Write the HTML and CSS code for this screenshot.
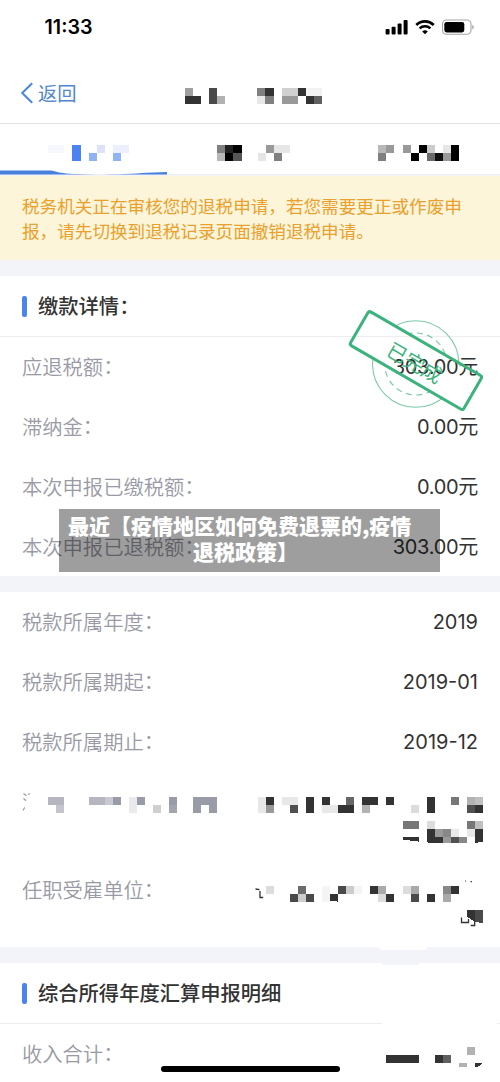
FILE: index.html
```html
<!DOCTYPE html>
<html lang="zh-CN">
<head>
<meta charset="utf-8">
<title>退税详情</title>
<link rel="stylesheet" href="styles.css">
</head>
<body>
<div class="screen">
  <header class="status">
    <span class="clock">11:33</span>
    <svg class="status-icons" width="90" height="18" viewBox="0 0 90 18">
      <rect x="0.6" y="11" width="4" height="5.4" rx="1"/>
      <rect x="6.6" y="8.8" width="4" height="7.6" rx="1"/>
      <rect x="12.6" y="5.6" width="4" height="10.8" rx="1"/>
      <rect x="18.6" y="2" width="4" height="14.4" rx="1"/>
      <path d="M31.300 6.900A12.600 12.600 0 0 1 48.700 6.900" fill="none" stroke="#000" stroke-width="2.700"/>
      <path d="M34.600 10.300A8 8 0 0 1 45.400 10.300" fill="none" stroke="#000" stroke-width="2.500"/>
      <path d="M37.200 13.400a4.200 4.200 0 0 1 5.600 0L40 16.300z"/>
      <rect x="57.500" y="2" width="28.500" height="14.300" rx="4" fill="none" stroke="#a3a3a3" stroke-width="1.100"/>
      <rect x="59.300" y="3.900" width="20" height="10.500" rx="2.300"/>
      <path d="M87.300 6.800c2 .8 2 3.900 0 4.700z" fill="#a3a3a3"/>
    </svg>
  </header>
  <nav class="navbar">
    <svg class="chevron" width="14" height="24" viewBox="0 0 14 24"><path d="M12.200 2.200L2.200 12l10 9.800"/></svg>
    <span class="back">返回</span>
    <svg class="nav-title" width="136.850" height="16.100" viewBox="23 11 17 2" shape-rendering="crispEdges">
      <path fill="#a0a0a0" d="M23 11h1v1h-1z"/><path fill="#333" d="M23 12h2v1h-2zM33 11h1v1h-1zM37 11h1v1h-1zM38 12h1v1h-1z"/>
      <path fill="#4a4a4a" d="M26 11h1v2h-1z"/><path fill="#b2b2b2" d="M27 12h1v1h-1z"/>
      <path fill="#808080" d="M32 11h1v1h-1zM33 12h1v1h-1z"/><path fill="#e8e8e8" d="M32 12h1v1h-1z"/>
      <path fill="#d0d0d0" d="M35 11h2v1h-2z"/><path fill="#f2f2f2" d="M38 11h2v1h-2z"/>
      <path fill="#999" d="M35 12h2v1h-2z"/><path fill="#606060" d="M39 12h1v1h-1z"/>
    </svg>
  </nav>
  <div class="tabs">
    <svg width="500" height="52" viewBox="0 0 500 52">
      <g transform="translate(0 -124) scale(8.050)" shape-rendering="crispEdges">
        <path fill="#f7f8fe" d="M6 18h2v1h-2z"/><path fill="#4a84f0" d="M9 18h1v2h-1z"/>
        <path fill="#8fb3f4" d="M11 19h1v1h-1zM14 19h1v1h-1z"/><path fill="#dde2fa" d="M12 18h1v1h-1z"/><path fill="#eeeffc" d="M14 18h2v1h-2z"/>
        <path fill="#808080" d="M27 18h1v1h-1zM34 19h1v1h-1zM47 19h1v1h-1z"/><path fill="#222" d="M28 18h1v1h-1z"/>
        <path fill="#000" d="M29 18h1v1h-1zM28 19h1v1h-1zM51 19h1v1h-1zM52 18h1v1h-1zM56 18h1v2h-1z"/>
        <path fill="#b8b8b8" d="M27 19h1v1h-1zM47 18h1v1h-1z"/><path fill="#555" d="M29 19h1v1h-1z"/>
        <path fill="#e6e6e6" d="M32 19h1v1h-1zM34 18h2v1h-2zM55 18h1v1h-1z"/>
        <path fill="#999" d="M33 18h1v1h-1zM48 18h1v1h-1zM50 18h1v1h-1zM55 19h1v1h-1z"/>
        <path fill="#ccc" d="M53 18h1v1h-1z"/><path fill="#6a6a6a" d="M53 19h1v1h-1z"/><path fill="#111" d="M54 19h1v1h-1z"/>
      </g>
      <path fill="#e9e9ee" d="M0 50.300h500v1.100H0z"/>
      <path fill="#4880de" d="M0 46.500h51C58 48 62 49.500 74 50C100 51 130 50 147 48.700L167 48v2.500H0z"/>
    </svg>
  </div>
  <p class="notice">税务机关正在审核您的退税申请，若您需要更正或作废申<br>报，请先切换到退税记录页面撤销退税申请。</p>

  <section class="card">
    <h2 class="heading">缴款详情<span class="colon">：</span></h2>
    <div class="row stamped"><span class="label">应退税额<span class="colon">：</span></span><span class="value amount">303.00元</span>
      <svg class="stamp" width="144" height="110" viewBox="344 306 144 110">
        <defs><clipPath id="ring"><path clip-rule="evenodd" d="M344 306h144v110H344zM369 310L483.500 376.500L463 411L348 344.500z"/></clipPath></defs>
        <g clip-path="url(#ring)" fill="none" stroke="#7cc9a8">
          <circle cx="415.700" cy="364" r="43.200" stroke-width="1.100"/>
          <circle cx="415.700" cy="364" r="31" stroke-width="1.200" stroke-dasharray="6 4.500"/>
        </g>
        <g transform="translate(415.900 360.600) rotate(30.100)">
          <rect x="-65.500" y="-19.500" width="131" height="39" rx="2.500" fill="none" stroke="#3cb37d" stroke-width="3"/>
          <text x="0" y="10" text-anchor="middle" class="stamp-text">已完成</text>
        </g>
      </svg>
    </div>
    <div class="row"><span class="label">滞纳金<span class="colon">：</span></span><span class="value amount">0.00元</span></div>
    <div class="row"><span class="label">本次申报已缴税额<span class="colon">：</span></span><span class="value amount">0.00元</span></div>
    <div class="row last"><span class="label">本次申报已退税额<span class="colon">：</span></span><span class="value amount">303.00元</span>
      <div class="banner"><div>最近【疫情地区如何免费退票的,疫情</div><div class="banner-second">退税政策】</div></div>
    </div>
  </section>

  <section class="card period">
    <div class="row"><span class="label">税款所属年度<span class="colon">：</span></span><span class="value">2019</span></div>
    <div class="row"><span class="label">税款所属期起<span class="colon">：</span></span><span class="value">2019-01</span></div>
    <div class="row"><span class="label">税款所属期止<span class="colon">：</span></span><span class="value">2019-12</span></div>
    <svg class="masked" width="500" height="87" viewBox="0 772 500 87">
      <path d="M23.500 793.500l3 2.200M23.500 798.500l2.500 2.200M23 810.500l1.700-3M28 794.500l2-1" stroke="#9a9ba6" stroke-width="1.200"/>
      <g transform="scale(8.050)" shape-rendering="crispEdges">
        <path fill="#b6b6c1" d="M6 99h2v1h-2zM11 99h2v1h-2z"/><path fill="#c4c4cc" d="M7 100h1v1h-1z"/>
        <path fill="#c9c9d6" d="M13 99h1v1h-1z"/><path fill="#9a9ba8" d="M14 99h1v1h-1zM17 99h1v1h-1zM21 99h1v1h-1zM24 99h3v2h-1v-1h-1v1h-1z"/>
        <path fill="#e9e9ee" d="M16 99h1v2h-1z"/><path fill="#cfcfd2" d="M19 100h1v1h-1z"/><path fill="#a2a5ae" d="M21 100h1v1h-1z"/>
        <path fill="#e8e8e8" d="M32 99h1v2h-1zM35 99h2v1h-2zM40 100h2v1h-2zM56 103h1v1h-1zM58 103h1v1h-1z"/>
        <path fill="#333" d="M33 99h1v1h-1zM38 99h1v2h-1zM40 99h1v1h-1zM42 100h2v1h-2zM45 99h2v1h-2zM48 99h1v1h-1zM53 99h1v2h-1zM59 100h1v1h-1zM50 104h2v.55L50 104.300zM53 103h1v1h1v.75L53 104.650zM59 103h1v1.600l-1 .1z"/>
        <path fill="#999" d="M33 100h1v1h-1zM54 103h1v1h-1zM55 104h1v.75h-1z"/><path fill="#505050" d="M36 100h1v1h-1zM58 100h1v1h-1zM56 104h1v.75h-1z"/>
        <path fill="#666" d="M43 99h1v1h-1z"/><path fill="#b2b2b2" d="M45 100h1v1h-1zM58 99h1v1h-1z"/>
        <path fill="#dcdcdc" d="M51 100h1v1h-1zM53 102h1v1h-1z"/><path fill="#777" d="M56 99h1v1h-1zM50 102h2v1h-2zM58 102h1v1h-1z"/>
        <path fill="#bfbfbf" d="M59 99h1v1h-1zM59 102h1v1h-1z"/><path fill="#888" d="M55 103h1v1h-1zM57 104h1v.75h-1z"/>
      </g>
    </svg>
    <div class="row employer"><span class="label">任职受雇单位<span class="colon">：</span></span>
      <svg width="235" height="60" viewBox="250 872 235 60">
        <path d="M255.500 889l4 .7M260 891v6.500h3.200M461.500 917.500v5h7v-3.500M474.700 921v4.500h-4" fill="none" stroke="#333" stroke-width="1.300"/>
        <path fill="#444" d="M465 880.500h1v1h-1zM470.500 881h1.500v1.300h-1.500z"/>
        <g transform="scale(8.050)" shape-rendering="crispEdges">
          <path fill="#dcdcdc" d="M33 110h1v1h-1zM47 111h1v1h-1zM50 110h1v1h-1z"/>
          <path fill="#4a4a4a" d="M36 111h1v1h-1zM38 111h1v1h-1zM42 110h1v1h-1zM51 111h1v1h-1zM59 113h1v1.650l-1-.1z"/>
          <path fill="#6c6c6c" d="M37 110h1v1h-1z"/><path fill="#ccc" d="M37 111h1v1h-1zM43 110h1v1h-1z"/><path fill="#f4f4f4" d="M40 110h1v2h-1zM44 110h1v1h-1z"/>
          <path fill="#333" d="M41 111h1v1l-1-.1zM46 110h1v1h-1zM48 111h1v1h-1zM53 111h1v1h-1zM56 110h1v1h-1zM58 113h1v1.500l-1-.6z"/>
          <path fill="#aaa" d="M47 110h1v1h-1zM51 110h1v1h-1zM55 111h1v1h-1z"/><path fill="#888" d="M55 110h1v1h-1z"/>
        </g>
      </svg>
    </div>
  </section>

  <section class="card summary">
    <h2 class="heading">综合所得年度汇算申报明细</h2>
    <div class="row"><span class="label">收入合计<span class="colon">：</span></span>
      <svg width="98" height="60" viewBox="386 1024 98 60">
        <g transform="scale(8.050)" shape-rendering="crispEdges">
          <path fill="#333" d="M48 131h4v1h-4zM54 131h1v1h-1zM59 132h1l-.4.350l-.3.150h-.3z"/><path fill="#606060" d="M55 131h1v1h-1z"/><path fill="#b2b2b2" d="M58 130h1v1h-1zM57 132h1v.55h-1z"/>
        </g>
      </svg>
    </div>
    <i class="smudge smudge-top"></i><i class="smudge smudge-bottom"></i><i class="smudge smudge-line"></i>
  </section>
  <div class="home-bar"></div>
</div>
</body>
</html>
```
FILE: styles.css
```css
* { box-sizing: border-box; }
body { margin: 0; background: #fff; font-family: Inter, "Noto Sans CJK SC", sans-serif; }
.screen { position: relative; width: 500px; height: 1082px; overflow: hidden; background: #f2f4f9; }
svg { display: block; flex: none; }

.status { height: 60px; padding: 18px 25px 0 44.500px; display: flex; justify-content: space-between; background: #fff; }
.clock { font-size: 19.700px; line-height: 19px; font-weight: 600; color: #000; }
.navbar { height: 64px; padding: 0 20px; display: flex; align-items: center; background: #fff; border-bottom: 1px solid #e2e2e4; }
.chevron { margin-top: 3px; fill: none; stroke: #4a86dc; stroke-width: 2; }
.back { width: 147.150px; margin: 4px 0 0 4px; font-size: 19.300px; line-height: 28px; color: #5087cf; }
.nav-title { margin-top: 10px; }
.tabs { height: 52px; background: #fff; }

.notice { margin: 0 0 16px; height: 84px; padding: 17.500px 0 0 22px; font-size: 17.600px; line-height: 25.500px; white-space: nowrap; color: #e9a02c; background: #fcf5d9; }

.card { position: relative; margin-bottom: 16px; background: #fff; }
.heading { display: flex; align-items: center; height: 61px; margin: 0; padding: 1px 0 0 21.500px; border-bottom: 1px solid #ededf0; font-size: 20.300px; line-height: 30px; font-weight: 500; color: #333; }
.heading::before { content: ""; width: 5.500px; height: 21.500px; margin-right: 11px; border-radius: 2px; background: #4a84ee; }
.row { position: relative; display: flex; align-items: center; justify-content: space-between; height: 60px; padding: 0 22px; font-size: 20.300px; line-height: 30px; }
.label { padding-top: 2px; font-weight: 350; color: #999aa5; }
.colon { display: inline-block; width: 11px; text-indent: 0; font-family: "Noto Sans CJK SC", sans-serif; line-height: 1; transform: translateY(-1px); }
.value { color: #333; font-size: 20px; }
.amount { letter-spacing: -.3px; }
.last { height: 59px; }

.stamp { position: absolute; left: 344px; top: -31px; }
.stamp-text { font: 400 20px "Noto Sans CJK SC", sans-serif; fill: #3cb37d; }
.banner { position: absolute; left: 59px; top: -8px; width: 381px; height: 63px; padding: 3px 0 0 9px; font-size: 21px; line-height: 26px; font-weight: 900; font-family: "Noto Sans CJK SC", sans-serif; color: #fff; white-space: nowrap; background: rgba(0, 0, 0, .38); }
.banner-second { padding-left: 125px; }

.employer { height: 88px; align-items: flex-start; padding: 15px 15px 0 22px; }
.employer svg { margin-top: -2px; }
.summary { height: 119px; margin: 0; }
.summary .row { padding-right: 16px; }
.smudge { position: absolute; background: #fff; }
.smudge-top { left: 379px; top: -16px; width: 48px; height: 3px; border-radius: 0 0 4px 4px; }
.smudge-bottom { left: 382px; top: 0; width: 37px; height: 2px; background: #f2f4f9; }
.smudge-line { left: 382px; top: 59px; width: 115px; height: 3px; }
.home-bar { position: absolute; left: 160.500px; top: 1066px; width: 179px; height: 6px; border-radius: 3px; background: #000; }
```
